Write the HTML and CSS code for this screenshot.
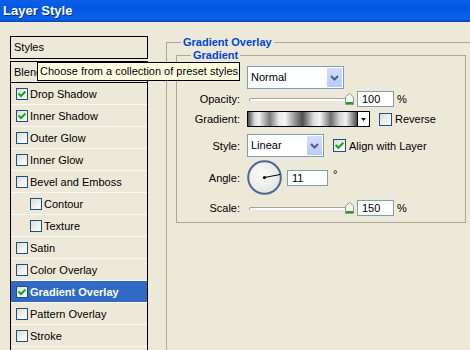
FILE: index.html
```html
<!DOCTYPE html>
<html lang="en">
<head>
  <meta charset="UTF-8">
  <meta name="viewport" content="width=device-width, initial-scale=1.0">
  <title>Layer Style</title>
  <link rel="stylesheet" href="styles.css">
</head>
<body>

  <div class="titlebar">Layer Style</div>

  <div class="dialog">

    <!-- Styles list -->
    <div class="styles-panel">
      <div class="styles-head">Styles</div>
      <ul class="style-list">
        <li class="blending">Blending Options: Default</li>
        <li><span class="cb"><svg viewBox="0 0 10 10"><path d="M1.5 4.5 L4 7 L8.5 2.5"/></svg></span>Drop Shadow</li>
        <li><span class="cb"><svg viewBox="0 0 10 10"><path d="M1.5 4.5 L4 7 L8.5 2.5"/></svg></span>Inner Shadow</li>
        <li><span class="cb"></span>Outer Glow</li>
        <li><span class="cb"></span>Inner Glow</li>
        <li><span class="cb"></span>Bevel and Emboss</li>
        <li class="sub"><span class="cb"></span>Contour</li>
        <li class="sub"><span class="cb"></span>Texture</li>
        <li><span class="cb"></span>Satin</li>
        <li><span class="cb"></span>Color Overlay</li>
        <li class="selected"><span class="cb"><svg viewBox="0 0 10 10"><path d="M1.5 4.5 L4 7 L8.5 2.5"/></svg></span>Gradient Overlay</li>
        <li><span class="cb"></span>Pattern Overlay</li>
        <li><span class="cb"></span>Stroke</li>
      </ul>
    </div>

    <!-- Gradient Overlay settings -->
    <fieldset class="group outer">
      <legend>Gradient Overlay</legend>
      <fieldset class="group inner">
        <legend>Gradient</legend>

        <div class="row r-blend">
          <span class="lbl">Blend Mode:</span>
          <div class="select blend">
            <span>Normal</span>
            <div class="select-btn"><svg width="9" height="6" viewBox="0 0 9 6"><path d="M1 1 L4.5 4.5 L8 1"/></svg></div>
          </div>
        </div>

        <div class="row r-opacity">
          <span class="lbl">Opacity:</span>
          <div class="slider">
            <div class="track"></div>
            <svg class="thumb" width="9" height="12" viewBox="0 0 9 12"><path d="M0.5 4 L4.5 0.5 L8.5 4 L8.5 11.5 L0.5 11.5 Z" fill="#f6f6f2" stroke="#8c9c8c"/><rect x="1" y="9" width="7" height="2" fill="#21a121"/></svg>
          </div>
          <input class="field" type="text" value="100">
          <span class="unit">%</span>
        </div>

        <div class="row r-gradient">
          <span class="lbl">Gradient:</span>
          <div class="swatch"></div>
          <div class="swatch-btn"><svg width="5" height="3" viewBox="0 0 5 3"><path d="M0 0 H5 L2.5 3 Z"/></svg></div>
          <span class="cb big gap-left"></span>
          <span class="check-label">Reverse</span>
        </div>

        <div class="row r-style">
          <span class="lbl">Style:</span>
          <div class="select style">
            <span>Linear</span>
            <div class="select-btn"><svg width="9" height="6" viewBox="0 0 9 6"><path d="M1 1 L4.5 4.5 L8 1"/></svg></div>
          </div>
          <span class="cb big align"><svg viewBox="0 0 10 10"><path d="M1.5 4.5 L4 7 L8.5 2.5"/></svg></span>
          <span class="check-label">Align with Layer</span>
        </div>

        <div class="row r-angle">
          <span class="lbl">Angle:</span>
          <svg class="dial" width="35" height="35" viewBox="0 0 35 35">
            <defs>
              <radialGradient id="dialFill" cx="0.4" cy="0.4" r="0.7">
                <stop offset="0" stop-color="#fbfbfa"/>
                <stop offset="1" stop-color="#e2e2dc"/>
              </radialGradient>
            </defs>
            <circle cx="17.5" cy="17.5" r="16.3" fill="url(#dialFill)" stroke="#4a6797" stroke-width="2"/>
            <line x1="17.5" y1="17.5" x2="33.2" y2="14.5" stroke="#000" stroke-width="1"/>
            <circle cx="17.5" cy="17.5" r="1.6" fill="#000"/>
          </svg>
          <input class="field angle" type="text" value="11">
          <span class="deg">°</span>
        </div>

        <div class="row r-scale">
          <span class="lbl">Scale:</span>
          <div class="slider">
            <div class="track"></div>
            <svg class="thumb" width="9" height="12" viewBox="0 0 9 12"><path d="M0.5 4 L4.5 0.5 L8.5 4 L8.5 11.5 L0.5 11.5 Z" fill="#f6f6f2" stroke="#8c9c8c"/><rect x="1" y="9" width="7" height="2" fill="#21a121"/></svg>
          </div>
          <input class="field" type="text" value="150">
          <span class="unit">%</span>
        </div>

      </fieldset>
    </fieldset>
  </div>

  <!-- Hover tooltip over the Blending Options row -->
  <div class="tooltip">Choose from a collection of preset styles</div>

</body>
</html>
```

FILE: styles.css
```css
body {
  margin: 0;
  width: 470px;
  height: 350px;
  overflow: hidden;
  position: relative;
  background-color: #ece9d8;
  font-family: "Liberation Sans", Arial, sans-serif;
  font-size: 11px;
  color: #000;
}

/* XP style window caption */
.titlebar {
  height: 22px;
  padding-left: 3px;
  line-height: 22px;
  font-size: 13px;
  font-weight: bold;
  color: #fff;
  text-shadow: 1px 1px 0 #0b2e8c;
  background: linear-gradient(#0b5ee6, #0058e6 40%, #0c62ea 85%, #0846c4);
}

.dialog {
  display: flex;
  align-items: flex-start;
  padding: 14px 0 0 10px;
}

/* Left styles list */
.styles-panel {
  width: 138px;
  flex-shrink: 0;
}

.styles-head {
  height: 23px;
  box-sizing: border-box;
  border: 1px solid #000;
  padding-left: 3px;
  line-height: 21px;
}

.style-list {
  list-style: none;
  margin: 2px 0 0;
  padding: 0;
  height: 320px;
  border: 1px solid #000;
  border-bottom: none;
}

.style-list li {
  height: 21px;
  display: flex;
  align-items: center;
  padding-left: 5px;
  white-space: nowrap;
  overflow: hidden;
  border-bottom: 1px solid #fbfaf4;
}

.style-list li.blending {
  height: 20px;
  padding-left: 3px;
  border-bottom-color: #000;
}

.style-list li.sub {
  padding-left: 19px;
}

.style-list li.selected {
  background-color: #316ac5;
  color: #fff;
  font-weight: bold;
}

/* Checkboxes */
.cb {
  width: 12px;
  height: 12px;
  box-sizing: border-box;
  flex-shrink: 0;
  display: inline-flex;
  margin-right: 2px;
  border: 1px solid #1c5180;
  background: linear-gradient(135deg, #dcdcd4, #f3f3ee 60%, #fff);
}

.cb.big {
  width: 13px;
  height: 13px;
}

.cb svg {
  width: 100%;
  height: 100%;
}

.cb path {
  fill: none;
  stroke: #21a121;
  stroke-width: 2;
}

/* Group boxes */
.group {
  margin: 0;
  box-sizing: border-box;
  border: 1px solid #aca899;
  min-width: 0;
}

.group legend {
  padding: 0 2px;
  line-height: 13px;
  font-weight: bold;
  color: #0046d5;
}

.outer {
  margin-left: 18px;
  width: 320px;
  height: 330px;
  padding: 0 0 0 9px;
  flex-shrink: 0;
}

.outer > legend {
  margin-left: 5px;
}

.inner {
  width: 290px;
  padding: 4px 0 5px 0;
}

.inner > legend {
  margin-left: 14px;
}

/* Setting rows */
.row {
  display: flex;
  align-items: center;
}

.lbl {
  width: 63px;
  margin-right: 7px;
  flex-shrink: 0;
  text-align: right;
  white-space: nowrap;
}

.r-blend { height: 23px; }
.r-opacity { height: 20px; }
.r-gradient { height: 20px; }
.r-style { height: 23px; margin-top: 5px; }
.r-angle { height: 35px; margin-top: 3px; }
.r-scale { height: 19px; margin-top: 3px; }

/* the tooltip sits over this label */
.r-blend .lbl {
  align-self: flex-start;
  margin-top: 1px;
  line-height: 13px;
}

/* Dropdowns */
.select {
  height: 23px;
  box-sizing: border-box;
  display: flex;
  border: 1px solid #7f9db9;
  background-color: #fff;
}

.select span {
  flex: 1;
  padding-left: 3px;
  line-height: 21px;
}

.select.blend { width: 97px; }
.select.style { width: 77px; }

.select-btn {
  width: 15px;
  margin: 1px;
  display: flex;
  align-items: center;
  justify-content: center;
  background: linear-gradient(#d2defc, #b6cafa);
}

.select-btn path {
  fill: none;
  stroke: #4d6185;
  stroke-width: 2;
}

/* Sliders */
.slider {
  position: relative;
  width: 108px;
  height: 12px;
  display: flex;
  align-items: center;
}

.track {
  flex: 1;
  height: 4px;
  margin: 2px 4px 0 2px;
  box-sizing: border-box;
  border: 1px solid #a5a39a;
  border-bottom-color: #e8e7e0;
  border-radius: 2px;
  background-color: #fff;
}

.thumb {
  position: absolute;
  left: 98px;
  top: 0;
}

/* Text fields */
.field {
  width: 37px;
  height: 16px;
  box-sizing: border-box;
  margin: 0 0 0 2px;
  padding: 0 0 0 4px;
  border: 1px solid #7f9db9;
  background-color: #fff;
  font: inherit;
  color: #000;
}

.field.angle {
  width: 41px;
  margin-left: 5px;
}

.unit {
  margin-left: 3px;
}

.deg {
  align-self: flex-start;
  margin: 8px 0 0 5px;
}

/* Gradient preview */
.swatch {
  width: 111px;
  height: 16px;
  box-sizing: border-box;
  border: 1px solid #000;
  background: linear-gradient(to right, #4c4c4c 0%, #d8d8d8 6%, #f2f2f2 10%, #7a7a7a 20%, #e8e8e8 28%, #f6f6f6 34%, #8a8a8a 44%, #505050 50%, #dcdcdc 60%, #f4f4f4 66%, #6e6e6e 76%, #d6d6d6 84%, #f2f2f2 90%, #4a4a4a 100%);
}

.swatch-btn {
  width: 12px;
  height: 16px;
  box-sizing: border-box;
  border: 1px solid #000;
  border-left: none;
  display: flex;
  align-items: center;
  justify-content: center;
  background-color: #fff;
}

.gap-left {
  margin-left: 9px;
}

.cb.align {
  margin-left: 9px;
}

.check-label {
  margin-left: 1px;
}

/* Tooltip */
.tooltip {
  position: absolute;
  left: 37px;
  top: 62px;
  width: 203px;
  height: 19px;
  box-sizing: border-box;
  padding-left: 2px;
  line-height: 17px;
  white-space: nowrap;
  border: 1px solid #000;
  background-color: #ffffe1;
}
```
